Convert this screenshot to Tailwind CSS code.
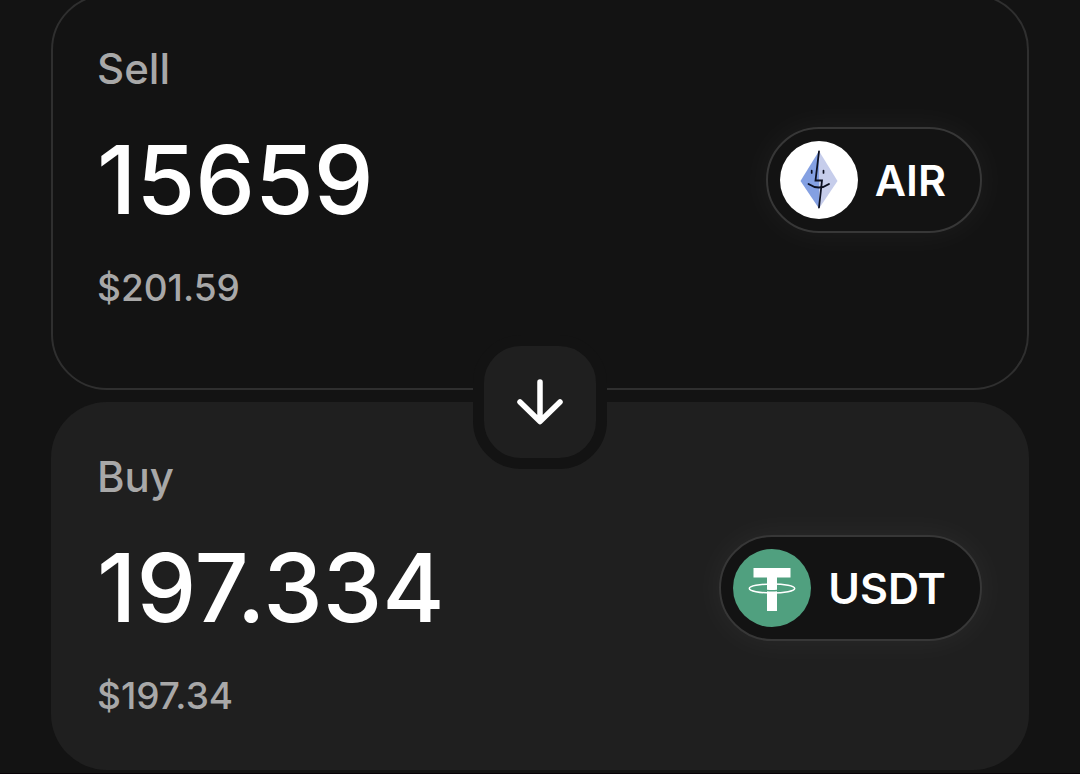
<!DOCTYPE html>
<html lang="en">
<head>
  <meta charset="utf-8"/>
  <meta name="viewport" content="width=device-width, initial-scale=1.0"/>
  <title>Swap</title>
  <script src="https://cdn.jsdelivr.net/npm/@tailwindcss/browser@4"></script>
</head>
<body class="bg-[#131313] text-white font-['Inter',sans-serif] font-medium overflow-hidden">
  <main class="mx-auto -mt-[6px] w-full px-[51px]">
    <!-- Sell -->
    <section class="rounded-[56px] border-2 border-[#2f2f2f] pt-[45px] pr-[45px] pb-[76px] pl-[44px]">
      <label for="sell-amount" class="block text-[42px] leading-[56px] text-[#a8a8a8]">Sell</label>
      <div class="mt-[23px] flex h-[120px] items-center justify-between gap-4">
        <input id="sell-amount" type="text" inputmode="decimal" value="15659" class="h-[120px] w-0 min-w-0 flex-1 bg-transparent text-[95px] leading-[120px] outline-none"/>
        <button type="button" class="flex shrink-0 items-center gap-[17px] rounded-full border-2 border-[#373737] bg-[#131313] py-[12px] pr-[34px] pl-[12px] shadow-[0_0_36px_rgba(255,255,255,0.05)]">
          <svg class="size-[78px]" viewBox="0 0 78 78" aria-hidden="true">
            <circle cx="39" cy="39" r="39" fill="#fff"/>
            <path d="M39 10 20.500 40 39 67.500z" fill="#84a0e2"/>
            <path d="M39 10 57.500 40 39 67.500z" fill="#c6cdeb"/>
            <path d="M39 10.500 35.500 39.500h6.500L39 66.500" fill="none" stroke="#0b0f20" stroke-width="1.800" stroke-linecap="round"/>
            <path d="M28.500 43q10.500 7 20.500 0" fill="none" stroke="#0b0f20" stroke-width="1.800" stroke-linecap="round"/>
            <path d="M31.700 29.500v2.500M43.500 29.500v2.500" stroke="#0b0f20" stroke-width="1.700" stroke-linecap="round"/>
          </svg>
          <span class="text-[43px] leading-[56px] font-semibold">AIR</span>
        </button>
      </div>
      <p class="mt-[24px] text-[37px] leading-[48px] text-[#a8a8a8]">$201.59</p>
    </section>

    <!-- Buy -->
    <section class="relative mt-3 rounded-[56px] bg-[#1f1f1f] pt-[47px] pr-[47px] pb-[50px] pl-[46px]">
      <button type="button" aria-label="Switch tokens" class="absolute top-0 left-1/2 flex size-[134px] -translate-x-1/2 -translate-y-1/2 items-center justify-center rounded-[48px] border-[11px] border-[#131313] bg-[#1f1f1f]">
        <svg class="size-[56px]" viewBox="0 0 56 56" fill="none" stroke="#fff" stroke-width="5.500" stroke-linecap="round" stroke-linejoin="round" aria-hidden="true">
          <path d="M28 8v39M8 28l20 19.500 20-19.500"/>
        </svg>
      </button>
      <label for="buy-amount" class="block text-[42px] leading-[56px] text-[#a8a8a8]">Buy</label>
      <div class="mt-[23px] flex h-[120px] items-center justify-between gap-4">
        <input id="buy-amount" type="text" inputmode="decimal" value="197.334" class="h-[120px] w-0 min-w-0 flex-1 bg-transparent text-[95px] leading-[120px] outline-none"/>
        <button type="button" class="flex shrink-0 items-center gap-[17px] rounded-full border-2 border-[#373737] bg-[#131313] py-[12px] pr-[34px] pl-[12px] shadow-[0_0_36px_rgba(255,255,255,0.05)]">
          <svg class="size-[78px]" viewBox="0 0 78 78" aria-hidden="true">
            <circle cx="39" cy="39" r="39" fill="#50a07f"/>
            <path d="M20.500 19h37v9.500H44V62H34V28.500H20.500z" fill="#fff"/>
            <path d="M34 41.500q5 .5 10 0" fill="none" stroke="#50a07f" stroke-width="1.500"/>
            <ellipse cx="39" cy="39.500" rx="22.700" ry="4.500" fill="none" stroke="#fff" stroke-width="1.500"/>
          </svg>
          <span class="text-[43px] leading-[56px] font-semibold">USDT</span>
        </button>
      </div>
      <p class="mt-[24px] text-[37px] leading-[48px] text-[#a8a8a8]">$197.34</p>
    </section>
  </main>
  <div class="mt-[3px] h-1 bg-[#080207]"></div>
</body>
</html>
